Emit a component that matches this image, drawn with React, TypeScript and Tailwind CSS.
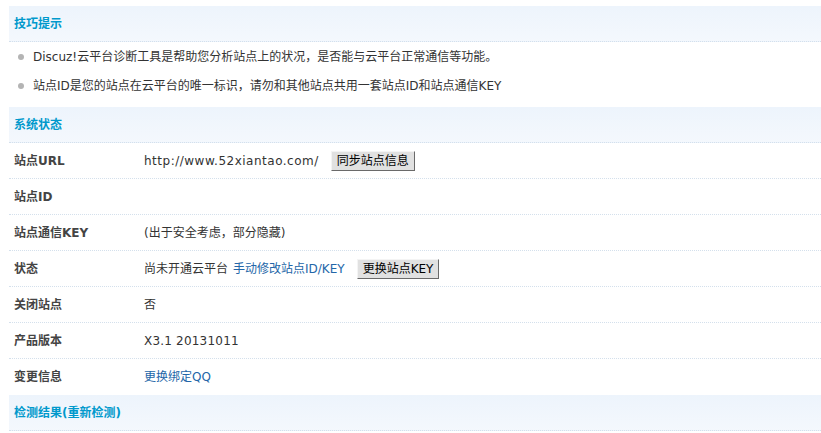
import React from "react";

const font = "font-['DejaVu_Sans','Noto_Sans_CJK_SC',sans-serif]";

function SectionHeader({ children }: { children: React.ReactNode }) {
  return (
    <div className="flex h-[36px] items-center border-b border-dotted border-[#d4e0ec] bg-linear-to-b from-[#edf4fc] to-[#f4f8fd] pl-[5px]">
      <h3 className="text-[12px] font-bold text-[#0099cc]">{children}</h3>
    </div>
  );
}

function Row({
  label,
  children,
  last = false,
}: {
  label: string;
  children?: React.ReactNode;
  last?: boolean;
}) {
  return (
    <div
      className={`flex h-[36px] items-center ${
        last ? "" : "border-b border-dotted border-[#d4e0ec]"
      }`}
    >
      <div className="w-[135px] pl-[5px] text-[12px] font-bold text-[#444]">{label}</div>
      <div className="flex items-center text-[12px] text-[#333]">{children}</div>
    </div>
  );
}

function Btn({ children }: { children: React.ReactNode }) {
  return (
    <button className="ml-[12px] h-[20px] border border-t-[#f4f4f4] border-l-[#f4f4f4] border-r-[#6a6a6a] border-b-[#6a6a6a] bg-[#e1e1e1] px-[5px] text-[12px] leading-none text-black">
      {children}
    </button>
  );
}

export default function App() {
  const tips = [
    "Discuz!云平台诊断工具是帮助您分析站点上的状况，是否能与云平台正常通信等功能。",
    "站点ID是您的站点在云平台的唯一标识，请勿和其他站点共用一套站点ID和站点通信KEY",
  ];

  return (
    <div className={`min-h-[433px] bg-white pl-[9px] pt-[6px] ${font}`}>
      {/* tips */}
      <SectionHeader>技巧提示</SectionHeader>
      <ul className="pb-[7px]">
        {tips.map((t) => (
          <li key={t} className="flex h-[29px] items-center text-[12px] text-[#333]">
            <span className="ml-[9px] mr-[9px] h-[6px] w-[6px] rounded-full bg-[#b4b4b4]" />
            {t}
          </li>
        ))}
      </ul>

      {/* status */}
      <SectionHeader>系统状态</SectionHeader>
      <Row label="站点URL">
        <span className="tracking-[0.5px]">http://www.52xiantao.com/</span>
        <Btn>同步站点信息</Btn>
      </Row>
      <Row label="站点ID" />
      <Row label="站点通信KEY">(出于安全考虑，部分隐藏)</Row>
      <Row label="状态">
        尚未开通云平台
        <a className="ml-[5px] text-[#2366a8]">手动修改站点ID/KEY</a>
        <Btn>更换站点KEY</Btn>
      </Row>
      <Row label="关闭站点">否</Row>
      <Row label="产品版本">
        <span className="tracking-[0.2px]">X3.1 20131011</span>
      </Row>
      <Row label="变更信息" last>
        <a className="text-[#2366a8]">更换绑定QQ</a>
      </Row>

      {/* result */}
      <SectionHeader>
        检测结果<a className="text-[#0099cc]">(重新检测)</a>
      </SectionHeader>
    </div>
  );
}
